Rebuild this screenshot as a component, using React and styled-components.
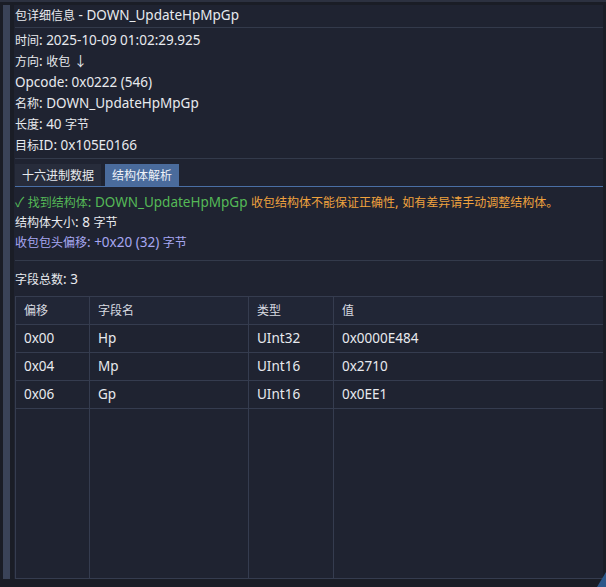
import React from "react";
import styled, { createGlobalStyle } from "styled-components";

const Global = createGlobalStyle`
  html, body { margin: 0; padding: 0; background: #1a1d26; }
  body {
    font-family: "Noto Sans", "Noto Sans CJK SC", sans-serif;
    font-size: 13.5px;
    color: #e8eaee;
  }
  * { box-sizing: border-box; }
`;

const Frame = styled.div`
  position: relative;
  width: 606px;
  height: 587px;
  border-top: 2px solid #2c3140;
  padding: 3px 3px 8px 3px;
  display: flex;
  background: #1a1d26;
  overflow: hidden;
`;

const SideBar = styled.div`
  width: 7px;
  background: #3a4358;
  margin-right: 4px;
  flex: none;
`;

const Panel = styled.div`
  flex: 1;
  background: #1f2331;
  display: flex;
  flex-direction: column;
  padding-left: 1px;
  min-width: 0;
`;

const Title = styled.div`
  height: 23px;
  line-height: 20px;
  padding-bottom: 2px;
  border-bottom: 1px solid #333a4b;
  white-space: nowrap;
`;

const Info = styled.div`
  padding-top: 2px;
`;

const Line = styled.div`
  height: ${(p) => p.$h || 21}px;
  line-height: ${(p) => p.$h || 21}px;
  margin-top: ${(p) => p.$mt || 0}px;
  white-space: nowrap;
  color: ${(p) => p.$color || "#e8eaee"};
`;

const Divider = styled.div`
  height: 1px;
  background: #333a4b;
  margin-top: ${(p) => p.$mt || 0}px;
  flex: none;
`;

const TabBar = styled.div`
  margin-top: 5px;
  display: flex;
  gap: 4px;
  border-bottom: 1px solid #4a6fa5;
  flex: none;
`;

const Tab = styled.div`
  height: 22px;
  line-height: 22px;
  padding: 0 7px;
  background: ${(p) => (p.$active ? "#4a6b9c" : "#272c3b")};
  color: ${(p) => (p.$active ? "#eef2f8" : "#e8eaee")};
  white-space: nowrap;
`;

const Messages = styled.div`
  padding-top: 5px;
`;

const Green = styled.span`
  color: #55b957;
`;

const Orange = styled.span`
  color: #f0a23e;
`;

const Han = styled.span`
  font-size: 12px;
`;

const Table = styled.div`
  margin-top: 7px;
  flex: 1;
  display: flex;
  flex-direction: column;
  border: 1px solid #353c4f;
  border-right: none;
  min-height: 0;
`;

const Row = styled.div`
  display: grid;
  grid-template-columns: 74px 159px 85px 1fr;
  height: ${(p) => (p.$fill ? "auto" : "28px")};
  flex: ${(p) => (p.$fill ? 1 : "none")};
  border-bottom: ${(p) => (p.$fill ? "none" : "1px solid #353c4f")};
  background: ${(p) => (p.$head ? "#212636" : "transparent")};
`;

const Cell = styled.div`
  padding-left: 8px;
  line-height: 27px;
  border-right: 1px solid #353c4f;
  white-space: nowrap;
  color: ${(p) => (p.$head ? "#d8dbe1" : "#e8eaee")};
  &:last-child { border-right: none; }
`;

const Grip = styled.div`
  position: absolute;
  right: 0;
  bottom: 0;
  width: 9px;
  height: 15px;
  background: #2c5789;
  clip-path: polygon(100% 0, 100% 100%, 0 100%);
`;

const cjkRe = /([\u2E80-\u9FFF\u3000-\u303F\uFF00-\uFFEF]+)/;

function T({ children }) {
  return String(children)
    .split(cjkRe)
    .map((s, i) => (i % 2 === 1 ? <Han key={i}>{s}</Han> : s));
}

const info = [
  "时间: 2025-10-09 01:02:29.925",
  "方向: 收包 ↓",
  "Opcode: 0x0222 (546)",
  "名称: DOWN_UpdateHpMpGp",
  "长度: 40 字节",
  "目标ID: 0x105E0166",
];

const fields = [
  ["0x00", "Hp", "UInt32", "0x0000E484"],
  ["0x04", "Mp", "UInt16", "0x2710"],
  ["0x06", "Gp", "UInt16", "0x0EE1"],
];

export default function App() {
  return (
    <>
      <Global />
      <Frame>
        <SideBar />
        <Panel>
          <Title>
            <T>包详细信息 - DOWN_UpdateHpMpGp</T>
          </Title>
          <Info>
            {info.map((l) => (
              <Line key={l}>
                <T>{l}</T>
              </Line>
            ))}
          </Info>
          <Divider $mt={2} />
          <TabBar>
            <Tab>
              <T>十六进制数据</T>
            </Tab>
            <Tab $active>
              <T>结构体解析</T>
            </Tab>
          </TabBar>
          <Messages>
            <Line $h={20}>
              <Green>
                ✓ <T>找到结构体: DOWN_UpdateHpMpGp</T>
              </Green>{" "}
              <Orange>
                <T>收包结构体不能保证正确性, 如有差异请手动调整结构体。</T>
              </Orange>
            </Line>
            <Line $h={20}>
              <T>结构体大小: 8 字节</T>
            </Line>
            <Line $h={20} $color="#a7a7f2">
              <T>收包包头偏移: +0x20 (32) 字节</T>
            </Line>
          </Messages>
          <Divider $mt={8} />
          <Line $h={20} $mt={8}>
            <T>字段总数: 3</T>
          </Line>
          <Table>
            <Row $head>
              {["偏移", "字段名", "类型", "值"].map((h) => (
                <Cell key={h} $head>
                  <T>{h}</T>
                </Cell>
              ))}
            </Row>
            {fields.map((r) => (
              <Row key={r[0]}>
                {r.map((c, i) => (
                  <Cell key={i}>{c}</Cell>
                ))}
              </Row>
            ))}
            <Row $fill>
              <Cell />
              <Cell />
              <Cell />
              <Cell />
            </Row>
          </Table>
        </Panel>
        <Grip />
      </Frame>
    </>
  );
}
